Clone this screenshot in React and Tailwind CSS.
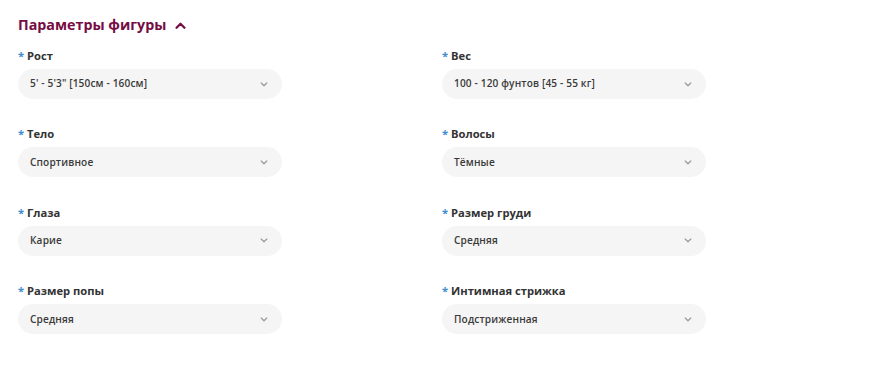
import React from 'react';

const fields = [
  { label: 'Рост', value: `5' - 5'3" [150см - 160см]` },
  { label: 'Вес', value: '100 - 120 фунтов [45 - 55 кг]' },
  { label: 'Тело', value: 'Спортивное' },
  { label: 'Волосы', value: 'Тёмные' },
  { label: 'Глаза', value: 'Карие' },
  { label: 'Размер груди', value: 'Средняя' },
  { label: 'Размер попы', value: 'Средняя' },
  { label: 'Интимная стрижка', value: 'Подстриженная' },
];

const Chevron = ({ className }) => (
  <svg viewBox="0 0 10 6" className={className} fill="none" stroke="currentColor" strokeWidth="1.6" strokeLinecap="round" strokeLinejoin="round">
    <path d="M1.5 1.2 5 4.6 8.5 1.2" />
  </svg>
);

const SelectField = ({ label, value }) => (
  <div className="flex flex-col">
    <label className="text-[11.2px] leading-4 font-bold text-[#333333] mb-[5px]">
      <span className="text-[#3e8ed0]">*</span> {label}
    </label>
    <div className="h-[30px] rounded-full bg-[#f5f5f5] flex items-center justify-between pl-3 pr-[14px]">
      <span className="text-[10.1px] tracking-[0.15px] font-semibold text-[#3a3a3a]">{value}</span>
      <Chevron className="w-[8px] h-[5px] text-[#9a9a9a]" />
    </div>
  </div>
);

export default function App() {
  return (
    <div className="w-[874px] h-[370px] bg-white px-[18px] pt-[15px]" style={{ fontFamily: '"Open Sans", "Noto Sans", sans-serif' }}>
      <h2 className="flex items-center gap-[9px] text-[14.3px] leading-5 font-bold text-[#760c44] mb-[13px]">
        Параметры фигуры
        <svg viewBox="0 0 12 8" className="w-[11px] h-[7px]" fill="none" stroke="currentColor" strokeWidth="2.6" strokeLinecap="round" strokeLinejoin="round">
          <path d="M1.5 6.5 6 2 10.5 6.5" />
        </svg>
      </h2>
      <div className="grid grid-cols-[264px_264px] gap-x-[160px] gap-y-[27.4px]">
        {fields.map((f) => (
          <SelectField key={f.label} label={f.label} value={f.value} />
        ))}
      </div>
    </div>
  );
}
